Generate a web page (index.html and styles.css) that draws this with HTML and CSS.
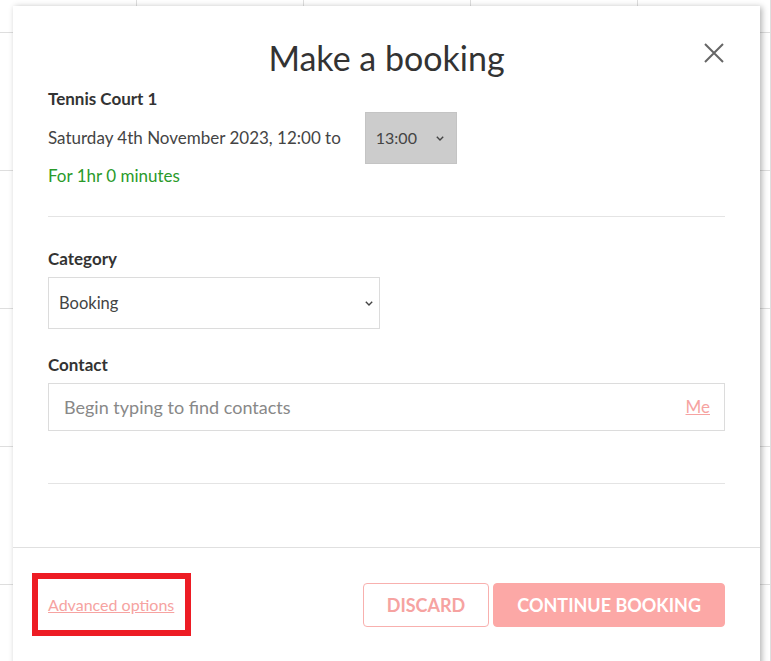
FILE: index.html
```html
<!DOCTYPE html>
<html lang="en">
<head>
    <meta charset="UTF-8">
    <meta name="viewport" content="width=device-width, initial-scale=1.0">
    <title>Make a booking</title>
    <link rel="stylesheet" href="styles.css">
</head>
<body>
    <div class="calendar">
        <div class="cell"></div><div class="cell"></div><div class="cell"></div><div class="cell"></div><div class="cell"></div>
        <div class="cell"></div><div class="cell"></div><div class="cell"></div><div class="cell"></div><div class="cell"></div>
        <div class="cell"></div><div class="cell"></div><div class="cell"></div><div class="cell"></div><div class="cell"></div>
        <div class="cell"></div><div class="cell"></div><div class="cell"></div><div class="cell"></div><div class="cell"></div>
        <div class="cell"></div><div class="cell"></div><div class="cell"></div><div class="cell"></div><div class="cell"></div>
        <div class="cell"></div><div class="cell"></div><div class="cell"></div><div class="cell"></div><div class="cell"></div>
    </div>

    <section class="modal">
        <div class="modalHeader">
            <h1 class="title">Make a booking</h1>
            <a href="#" class="close">
                <svg width="20" height="20" viewBox="0 0 20 20">
                    <path d="M1 1 L19 19 M19 1 L1 19" stroke="#666" stroke-width="2" fill="none"/>
                </svg>
            </a>
        </div>

        <div class="modalBody">
            <div class="resource">Tennis Court 1</div>
            <div class="timeRow">
                <span>Saturday 4th November 2023, 12:00 to</span>
                <div class="select timeSelect">
                    <span>13:00</span>
                    <svg width="8" height="5" viewBox="0 0 8 5"><path d="M0.8 0.8 L4 4 L7.2 0.8" stroke="#444" stroke-width="1.4" fill="none"/></svg>
                </div>
            </div>
            <div class="duration">For 1hr 0 minutes</div>

            <hr class="divider first">

            <label class="label">Category</label>
            <div class="select categorySelect">
                <span>Booking</span>
                <svg width="8" height="5" viewBox="0 0 8 5"><path d="M0.8 0.8 L4 4 L7.2 0.8" stroke="#444" stroke-width="1.4" fill="none"/></svg>
            </div>

            <label class="label contactLabel">Contact</label>
            <div class="contactInput">
                <span class="placeholder">Begin typing to find contacts</span>
                <a href="#" class="pinkLink">Me</a>
            </div>

            <hr class="divider last">
        </div>

        <div class="modalFooter">
            <div class="highlight">
                <a href="#" class="pinkLink advanced">Advanced options</a>
            </div>
            <div class="buttons">
                <a href="#" class="btn discard">DISCARD</a>
                <a href="#" class="btn continue">CONTINUE BOOKING</a>
            </div>
        </div>
    </section>
</body>
</html>
```

FILE: styles.css
```css
body{
    margin: 0px;
    height: 661px;
    overflow: hidden;
    position: relative;
    background: #fff;
    font-family: Lato, 'Open Sans', sans-serif;
    color: #444;
}
a{
    text-decoration: none;
}
.calendar{
    display: grid;
    grid-template-columns: 137px 167px 167px 167px 1fr;
    grid-template-rows: 33px repeat(5, 138px);
}
.cell{
    border-right: 1px solid #dedede;
    border-bottom: 1px solid #dedede;
}
.modal{
    position: absolute;
    top: 6px;
    left: 13px;
    width: 747px;
    height: 700px;
    background: #fff;
    box-shadow: 2px 1px 6px rgba(0,0,0,0.3);
}
.modalHeader{
    position: relative;
    padding-top: 31px;
}
.title{
    margin: 0;
    font-size: 34px;
    font-weight: 400;
    line-height: 41px;
    color: #333;
    text-align: center;
}
.close{
    position: absolute;
    top: 37px;
    right: 36px;
    display: block;
    width: 20px;
    height: 20px;
}
.modalBody{
    padding: 0 35px;
    font-size: 17px;
    line-height: 20px;
}
.resource{
    margin-top: 11px;
    font-weight: 700;
    color: #333;
}
.timeRow{
    display: flex;
    align-items: center;
    margin-top: 3px;
}
.select{
    display: flex;
    align-items: center;
    justify-content: space-between;
    box-sizing: border-box;
    color: #444;
}
.timeSelect{
    width: 92px;
    height: 52px;
    margin-left: 24px;
    padding: 0 12px 0 10px;
    background: #cccccc;
    border: 1px solid #c4c4c4;
    font-size: 16px;
}
.duration{
    margin-top: 2px;
    color: #2a9a2a;
}
.divider{
    border: none;
    border-top: 1px solid #e4e4e4;
    margin: 0;
}
.divider.first{
    margin-top: 30px;
}
.divider.last{
    margin-top: 52px;
    margin-bottom: 63px;
}
.label{
    display: block;
    margin-top: 32px;
    font-weight: 700;
    color: #333;
}
.contactLabel{
    margin-top: 26px;
}
.categorySelect{
    width: 332px;
    height: 52px;
    margin-top: 8px;
    padding: 0 6px 0 10px;
    border: 1px solid #dcdcdc;
    font-size: 16.5px;
}
.contactInput{
    display: flex;
    align-items: center;
    justify-content: space-between;
    box-sizing: border-box;
    height: 48px;
    margin-top: 8px;
    padding: 0 14px 0 15px;
    border: 1px solid #dcdcdc;
    font-size: 18px;
}
.placeholder{
    color: #888;
}
.pinkLink{
    color: #f6a3a1;
    text-decoration: underline;
}
.contactInput .pinkLink{
    font-size: 17px;
}
.modalFooter{
    display: flex;
    align-items: center;
    justify-content: space-between;
    border-top: 1px solid #e0e0e0;
    padding: 25px 35px 0 35px;
}
.highlight{
    margin-left: -16px;
    padding: 17px 11px 17px 10px;
    border: 6px solid #ed1c24;
    line-height: 17px;
}
.advanced{
    font-size: 16px;
}
.buttons{
    display: flex;
    gap: 4px;
}
.btn{
    display: block;
    box-sizing: border-box;
    height: 44px;
    line-height: 42px;
    padding: 0 23px;
    border-radius: 4px;
    font-size: 18px;
    font-weight: 700;
    border: 1px solid #f8b0ae;
}
.discard{
    color: #f6a3a1;
    background: #fff;
}
.continue{
    color: #fff;
    background: #fca8a6;
    border-color: #fca8a6;
}
```
